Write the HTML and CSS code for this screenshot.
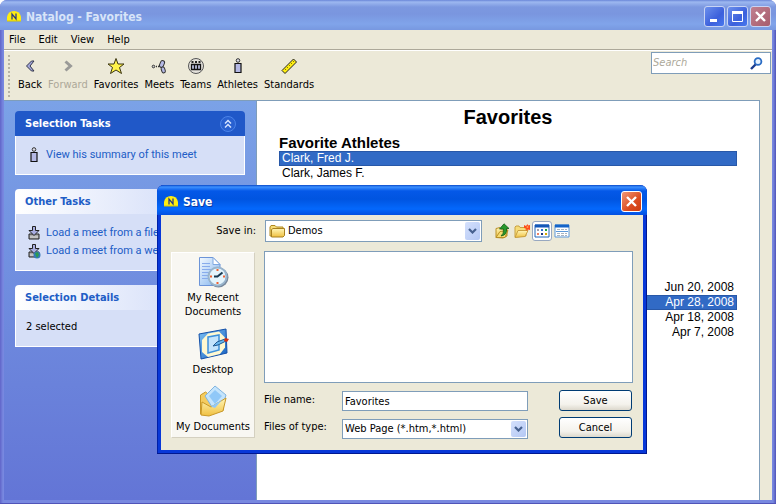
FILE: index.html
```html
<!DOCTYPE html>
<html lang="en">
<head>
<meta charset="utf-8">
<title>Natalog - Favorites</title>
<link rel="stylesheet" href="styles.css">
</head>
<body>
<svg class="defs" aria-hidden="true">
  <defs>
    <linearGradient id="blue" x1="0" y1="0" x2="1" y2="1"><stop offset="0" stop-color="#f4faff"/><stop offset="1" stop-color="#7fb2ee"/></linearGradient>
    <linearGradient id="gold" x1="0" y1="0" x2="0" y2="1"><stop offset="0" stop-color="#fff6b8"/><stop offset="1" stop-color="#f0c040"/></linearGradient>
    <linearGradient id="desk" x1="0" y1="0" x2="1" y2="1"><stop offset="0" stop-color="#7cc0f4"/><stop offset="1" stop-color="#1560c0"/></linearGradient>
    <symbol id="cap" viewBox="0 0 14 11"><path d="M0 10V6Q1 0 7 0t7 6v4z" fill="#ffee10"/><path d="M0 10h14" stroke="#d8c800"/><path d="M5 8.500V3l4 5V2.500" fill="none" stroke="#2a3c80" stroke-width="1.300"/></symbol>
    <symbol id="person" viewBox="0 0 8 16"><circle cx="4" cy="2.500" r="1.800" fill="#dcdce8" stroke="#333" stroke-width="1"/><path d="M1 5.500h6v9H1z" fill="#b4b8e4" stroke="#111" stroke-width="1.200"/></symbol>
    <symbol id="chev" viewBox="0 0 9 6"><path d="M1 1l3.500 3.500L8 1" fill="none" stroke="#46618f" stroke-width="2.200"/></symbol>
    <symbol id="load" viewBox="0 0 12 14"><path d="M1 8h10v5H1z" fill="#aaa" stroke="#222"/><path d="M4.500.5h3v4H11L6 9.500 1 4.500h3.500z" fill="#a9ade0" stroke="#222"/><path d="M2 11h8" stroke="#ddd"/></symbol>
  </defs>
</svg>
<div class="window">
  <header class="titlebar">
    <svg class="cap"><use href="#cap"/></svg>
    <h1 class="caption">Natalog - Favorites</h1>
    <button class="winbtn" aria-label="Minimize"><svg viewBox="0 0 17 17"><path d="M4 12.500h7" stroke="#fff" stroke-width="3"/></svg></button>
    <button class="winbtn" aria-label="Maximize"><svg viewBox="0 0 17 17"><path d="M3.500 3.500h10v10h-10z" fill="none" stroke="#fff"/><path d="M3 4.500h11" stroke="#fff" stroke-width="3"/></svg></button>
    <button class="winbtn close" aria-label="Close"><svg viewBox="0 0 17 17"><path d="M4 4l9 9M13 4l-9 9" stroke="#fff" stroke-width="2.400"/></svg></button>
  </header>
  <nav class="menubar"><button>File</button><button>Edit</button><button>View</button><button>Help</button></nav>
  <div class="toolbar">
    <span class="grip"></span>
    <div class="tools">
      <button><svg viewBox="0 0 18 18"><path d="M10.500 4h2.500L9 9l4 5h-2.500L5.500 9z" fill="#a4a8dc" stroke="#303448"/></svg>Back</button>
      <button disabled><svg viewBox="0 0 18 18"><path d="M6.500 4.500L11.500 9l-5 4.500" fill="none" stroke="#9a9a98" stroke-width="3"/></svg>Forward</button>
      <button><svg viewBox="0 0 18 18"><path d="M9 1.500l2 5.500h6l-4.500 3.500 2 6L9 13l-5.500 3.500 2-6L1 7h6z" fill="#fff34a" stroke="#3a3410"/></svg>Favorites</button>
      <button><svg viewBox="0 0 18 18"><circle cx="3.500" cy="9.500" r="1.300" fill="#ccc" stroke="#333"/><path d="M6 9.500h3" stroke="#333" stroke-width="1.500" stroke-dasharray="1 1"/><rect x="10" y="3.500" width="4" height="7" rx="2" transform="rotate(22 12 7)" fill="#b4b8e4" stroke="#333"/><rect x="11.500" y="10" width="3.500" height="6" rx="1.700" transform="rotate(-18 13 13)" fill="#b4b8e4" stroke="#333"/></svg>Meets</button>
      <button><svg viewBox="0 0 18 18"><circle cx="9" cy="9" r="7.500" fill="#e4e2dc" stroke="#555"/><path d="M4.500 7.500h9v5h-9zM7.500 7v6M10.500 7v6" fill="#c4c8ea" stroke="#111" stroke-width="1.300"/><path d="M4.500 5h2M8 5h2M11.500 5h2" stroke="#222" stroke-width="2"/></svg>Teams</button>
      <button><svg viewBox="0 0 18 18"><use href="#person" x="5" y="1" width="8" height="16"/></svg>Athletes</button>
      <button><svg viewBox="0 0 18 18"><path d="M2 13.500L13.500 2l3 3L5 16.500z" fill="#ffee10" stroke="#222"/><path d="M5 12l1 1m1-3l1 1m1-3l1 1m1-3l1 1m1-3l1 1" stroke="#887c00"/></svg>Standards</button>
    </div>
    <div class="search">
      <input type="search" placeholder="Search" aria-label="Search">
      <svg viewBox="0 0 13 13"><circle cx="8" cy="4.500" r="3.400" fill="#e6f2ff" stroke="#2a6cc4" stroke-width="1.800"/><path d="M5.500 7.500L1 12" stroke="#1a3c90" stroke-width="2.400"/></svg>
    </div>
  </div>
  <div class="workspace">
    <aside class="sidebar">
      <section class="task primary">
        <h2>Selection Tasks <button aria-label="Collapse"><svg viewBox="0 0 16 16"><circle cx="8" cy="8" r="7.500" fill="#2860d0" stroke="#4c84e8"/><path d="M5 7.500l3-3 3 3M5 11.500l3-3 3 3" fill="none" stroke="#d4e2ff" stroke-width="1.500"/></svg></button></h2>
        <ul><li><svg viewBox="0 0 16 16"><use href="#person" x="4" y="0" width="8" height="16"/></svg><a href="#">View his summary of this meet</a></li></ul>
      </section>
      <section class="task">
        <h2>Other Tasks</h2>
        <ul>
          <li><svg viewBox="0 0 16 16"><use href="#load" x="2" y="1" width="12" height="14"/></svg><a href="#">Load a meet from a file</a></li>
          <li><svg viewBox="0 0 16 16"><use href="#load" x="2" y="1" width="12" height="14"/><circle cx="11" cy="12" r="3.500" fill="#3478b8"/><path d="M9 10l3-1 1 3-2 3-1-2z" fill="#2c9a50"/></svg><a href="#">Load a meet from a web page</a></li>
        </ul>
      </section>
      <section class="task">
        <h2>Selection Details</h2>
        <p>2 selected</p>
      </section>
    </aside>
    <main class="page">
      <h2>Favorites</h2>
      <h3>Favorite Athletes</h3>
      <ul class="rows">
        <li class="on">Clark, Fred J.</li>
        <li>Clark, James F.</li>
      </ul>
      <ul class="rows dates">
        <li>Jun 20, 2008</li>
        <li class="on">Apr 28, 2008</li>
        <li>Apr 18, 2008</li>
        <li>Apr 7, 2008</li>
      </ul>
    </main>
  </div>

  <div class="dialog" role="dialog" aria-labelledby="dlg-title">
    <header class="titlebar">
      <svg class="cap"><use href="#cap"/></svg>
      <h2 class="caption" id="dlg-title">Save</h2>
      <button class="winbtn close" aria-label="Close"><svg viewBox="0 0 17 17"><path d="M4 4l9 9M13 4l-9 9" stroke="#fff" stroke-width="2.400"/></svg></button>
    </header>
    <form class="form">
      <div class="lookin">
        <label for="folder">Save in:</label>
        <div class="combo foldered">
          <svg class="folder" viewBox="0 0 16 14"><path d="M1 12V3l1-1.500h4L7.500 3H14v9z" fill="#f6dc78" stroke="#b08820"/><path d="M2.500 13V5.500L4 4.500h11.500v7L14 13z" fill="url(#gold)" stroke="#a88020"/></svg>
          <select id="folder"><option>Demos</option></select>
          <span class="arrow"><svg><use href="#chev"/></svg></span>
        </div>
        <div class="iconbar">
          <button type="button" aria-label="Up one level"><svg viewBox="0 0 16 16"><path d="M2 14.500V5.500l4-1 1 1.500h6v7l-4 2z" fill="url(#gold)" stroke="#b89028"/><path d="M2 14.500l4-6 8-1-3 7z" fill="#f8dc70" stroke="#b89028"/><path d="M7 13q3-2 2.500-7H5.500L10 .8 15 5.500h-2.500Q13.500 12 7 13z" fill="#28982c" stroke="#136013" stroke-width=".8"/></svg></button>
          <button type="button" aria-label="New folder"><svg viewBox="0 0 16 16"><path d="M1 14V4l1-1h3l1 1.500h6V13z" fill="#f6dc78" stroke="#c8a040"/><path d="M1 14.500l3-7h10l-3 6z" fill="url(#gold)" stroke="#c8a040"/><path d="M10 2l2 1 1.500-2L14 2.500l2-.5v5l-2-.5-1.500 1.500-.5-2.500L10 5z" fill="#ff4a18"/><circle cx="13.500" cy="4" r="1" fill="#ffa050"/></svg></button>
          <button type="button" class="pressed" aria-label="Icons"><svg viewBox="0 0 16 16"><path d="M1 2h14v12H1z" fill="#fff" stroke="#2468b8"/><path d="M1 3h14" stroke="#1458b8" stroke-width="3"/><path d="M3 7h2" stroke="#a0a0b0" stroke-width="2"/><path d="M3 11h2" stroke="#f08060" stroke-width="2"/><path d="M7 7h2" stroke="#3070d8" stroke-width="2"/><path d="M7 11h2" stroke="#203880" stroke-width="2"/><path d="M11 7h2" stroke="#20a040" stroke-width="2"/><path d="M11 11h2" stroke="#d8a800" stroke-width="2"/></svg></button>
          <button type="button" aria-label="Details"><svg viewBox="0 0 16 16"><path d="M1 2h14v12H1z" fill="#fff" stroke="#5c98d8"/><path d="M1 3h14" stroke="#1464c8" stroke-width="3"/><path d="M3 6.500h10M3 10.500h10M3 12.500h10" stroke="#a8b4c0" stroke-dasharray="3 1"/><path d="M2 8.500h12" stroke="#5c98d8"/></svg></button>
        </div>
      </div>
      <div class="browse">
        <nav class="places">
          <button type="button"><svg viewBox="0 0 32 32"><path d="M2.500 1.500H16l7 7v21H2.500z" fill="url(#blue)" stroke="#6c94d8"/><path d="M16 1.500v7h7z" fill="#fff" stroke="#80a8e0"/><path d="M5 7.500h8M5 10.500h8M5 13.500h12M5 16.500h8M5 19.500h6M5 22.500h6" stroke="#88acec"/><circle cx="21.500" cy="21.500" r="10" fill="#78889c"/><circle cx="20.500" cy="20.500" r="9" fill="#e4f4fc" stroke="#98b4cc" stroke-width="2"/><path d="M20.500 20.500l5-4M17 20.500h4" stroke="#183850" stroke-width="2"/><path d="M20.500 13v2M20.500 26v2M13 20.500h2M26 20.500h2" stroke="#f06030" stroke-width="2"/></svg>My Recent Documents</button>
          <button type="button"><svg viewBox="0 0 32 32"><path d="M2 6L29 1l1 24L4 31z" fill="url(#desk)" stroke="#1450a8"/><path d="M11 5.500l11-2 6 6v10l-5 6.500-12 3-6-5V12z" fill="#fff8d0"/><path d="M11 9l11-2v15l-11 3z" fill="#c4e4fc" stroke="#3c90dc" stroke-width="1.500"/><path d="M16 18l4-4 8-3 1 2-8 4z" fill="#68b8f0" stroke="#205890"/><path d="M28 10l4 1-2 3-3-1z" fill="#d83010"/></svg>Desktop</button>
          <button type="button"><svg viewBox="0 0 32 32"><path d="M3.500 29V10l5-3 5 4 13 2v12z" fill="#f4cc60" stroke="#c89828"/><path d="M8 11L18 1l11 9-3 10-9 5z" fill="#c4e4fc" stroke="#80b4e0"/><path d="M12 11l6-6 7 6-7 8z" fill="#90c8f8"/><path d="M4 30l1-13 9 5 15-9-3 13-14 5z" fill="url(#gold)" stroke="#c89828"/><path d="M14 21.500l11-6.500-7 8z" fill="#90c8f8"/></svg>My Documents</button>
        </nav>
        <div class="files">
          <div class="listing"></div>
          <div class="fields">
            <label for="fname">File name:</label>
            <input id="fname" type="text" value="Favorites">
            <button type="submit" class="push">Save</button>
            <label for="ftype">Files of type:</label>
            <div class="combo">
              <select id="ftype"><option>Web Page (*.htm,*.html)</option></select>
              <span class="arrow"><svg><use href="#chev"/></svg></span>
            </div>
            <button type="button" class="push">Cancel</button>
          </div>
        </div>
      </div>
    </form>
  </div>
</div>
</body>
</html>
```
FILE: styles.css
```css
* { box-sizing: border-box; margin: 0; padding: 0; }
:root {
  --face: #ece9d8;
  --line: #7f9db9;
  --link: #215dc6;
}
html, body { height: 100%; }
body, button, input, select {
  font: 11px/14px "DejaVu Sans Condensed", "Noto Sans", sans-serif;
  color: #000;
}
body { background: #fff; overflow: hidden; }
button { background: none; border: 0; }
ul { list-style: none; }
svg { display: block; flex: none; }
.defs { position: absolute; width: 0; height: 0; }

.window {
  position: relative;
  display: flex;
  flex-direction: column;
  min-height: 100vh;
  padding: 0 4px 4px;
  border-radius: 7px 7px 0 0;
  background: linear-gradient(to right, #6064c8 0, #7888e0 3px, #7888e0 calc(100% - 3px), #5054b8 100%);
  box-shadow: inset 0 -1px #5054b8;
}
.titlebar {
  display: flex;
  align-items: center;
  gap: 2px;
  height: 30px;
  margin: 0 -4px;
  padding: 3px 5px 0 7px;
  border-radius: 7px 7px 0 0;
  background: linear-gradient(#6a86d8 0, #9db8f0 2px, #7c98e0 7px, #7a96df 14px, #80a4ea 24px, #7898e0 30px);
}
.cap { width: 14px; height: 11px; }
.caption {
  flex: 1;
  padding-left: 3px;
  font: bold 12px/16px "DejaVu Sans Condensed", "Noto Sans", sans-serif;
  color: #d8e4f8;
}
.winbtn {
  width: 21px;
  height: 21px;
  border: 1px solid #c8d4f4;
  border-radius: 3px;
  padding: 1px;
  background: linear-gradient(135deg, #6c90ec, #3c60dc 60%, #4878ee);
}
.winbtn.close { background: linear-gradient(135deg, #c08090, #a85c6c); }

.menubar {
  display: flex;
  gap: 13px;
  height: 20px;
  padding: 0 5px;
  background: var(--face);
  border-bottom: 1px solid #aca899;
}
.toolbar {
  display: flex;
  justify-content: space-between;
  height: 50px;
  padding: 1px 1px 0 4px;
  background: var(--face);
  border-top: 1px solid #fff;
}
.grip {
  width: 2px;
  margin: 3px 0;
  background: repeating-linear-gradient(#b8b4a4 0 2px, transparent 2px 4px);
}
.tools { display: flex; flex: 1; gap: 6px; padding: 5px 8px; }
.tools button {
  display: flex;
  flex-direction: column;
  align-items: center;
  gap: 3px;
  height: 36px;
}
.tools svg { width: 18px; height: 18px; }
.tools button:disabled { color: #aca899; }
.search {
  display: flex;
  align-items: center;
  width: 120px;
  height: 22px;
  padding-right: 7px;
  background: #fff;
  border: 1px solid var(--line);
}
.search input {
  flex: 1;
  min-width: 0;
  padding-left: 1px;
  border: 0;
  outline: 0;
  background: none;
  font-style: italic;
}
.search input::placeholder { color: #aca899; }
.search svg { width: 13px; height: 13px; }

.workspace { display: flex; flex: 1; padding-right: 12px; background: var(--face); }
.sidebar {
  display: flex;
  flex-direction: column;
  gap: 14px;
  width: 253px;
  padding: 10px 11px;
  background: linear-gradient(#7ba2e7, #6375d6);
  border-top: 1px solid var(--line);
  border-right: 1px solid var(--line);
}
.task { border-radius: 4px 4px 0 0; overflow: hidden; }
.task h2 {
  display: flex;
  justify-content: space-between;
  align-items: center;
  height: 25px;
  padding: 0 9px 0 10px;
  font-size: 11px;
  color: var(--link);
  background: linear-gradient(to right, #fff, #c6d3f7);
}
.task.primary h2 { color: #fff; background: #2058c8; }
.task h2 svg { width: 16px; height: 16px; }
.task ul, .task p {
  padding: 10px;
  background: #d6dff7;
  border: 1px solid #fff;
  border-top: 0;
}
.task p { padding-bottom: 12px; }
.task li { display: flex; align-items: center; gap: 4px; height: 18px; white-space: nowrap; }
.task li svg { width: 16px; height: 16px; }
.task a {
  font-family: Roboto, sans-serif;
  color: var(--link);
  text-decoration: none;
}

.page {
  flex: 1;
  padding: 5px 22px;
  background: #fff;
  border-top: 1px solid var(--line);
  border-right: 1px solid var(--line);
  font: 12px/15px "Liberation Sans", sans-serif;
}
.page h2 { font-size: 20px; line-height: 22px; text-align: center; }
.page h3 { margin-top: 7px; font-size: 15px; line-height: 16px; }
.rows li { padding: 0 3px; }
.rows .on { color: #fff; background: #316ac5; box-shadow: inset 0 0 0 1px #2858a8; }
.dates { margin-top: 99px; text-align: right; }

.dialog {
  position: absolute;
  top: 185px;
  left: 157px;
  width: 490px;
  padding: 0 4px 4px;
  border-radius: 7px 7px 0 0;
  background: #0838d8;
  box-shadow: inset -1px -1px #001890, inset 1px 0 #0020a8;
}
.dialog .titlebar {
  background: linear-gradient(#0848c8 0, #3c90ff 2px, #0458e8 6px, #0054e0 14px, #0468fc 24px, #0450e0 30px);
}
.dialog .caption { color: #fff; text-shadow: 1px 1px #0838a0; }
.dialog .close { border-color: #fff; background: linear-gradient(135deg, #f09878, #dc4c20 60%, #cc3c10); }
.form { padding: 5px 10px 11px; background: var(--face); }
.lookin { display: flex; align-items: center; height: 22px; }
.lookin label { width: 85px; text-align: right; }
.combo { position: relative; }
.foldered { width: 217px; margin-left: 9px; }
.folder { position: absolute; left: 4px; top: 4px; width: 16px; height: 14px; }
.arrow {
  position: absolute;
  right: 2px;
  top: 2px;
  bottom: 2px;
  width: 15px;
  display: grid;
  place-items: center;
  border-radius: 2px;
  background: linear-gradient(135deg, #d4e0fc, #b4c8f4);
  pointer-events: none;
}
.arrow svg { width: 9px; height: 6px; }
.form select, .form input {
  display: block;
  width: 100%;
  height: 20px;
  padding: 0 2px;
  appearance: none;
  border: 1px solid var(--line);
  border-radius: 0;
  background: #fff;
}
.form .foldered select { height: 22px; padding-left: 22px; }
.iconbar { display: flex; align-items: center; padding-left: 10px; }
.iconbar button { width: 20px; height: 20px; padding: 1px; border: 1px solid transparent; border-radius: 3px; }
.iconbar svg { width: 16px; height: 16px; }
.iconbar .pressed { background: #fff; border-color: #98a8c0; }

.browse { display: flex; gap: 9px; margin-top: 9px; }
.places {
  display: flex;
  flex-direction: column;
  justify-content: space-between;
  width: 84px;
  margin: 1px 0;
  padding: 3px 0;
  background: #f8f7f2;
  border: 1px solid #fff;
  border-right-color: #d4d0c0;
  border-bottom-color: #d4d0c0;
}
.places button {
  display: flex;
  flex-direction: column;
  align-items: center;
  gap: 3px;
  padding: 0 12px;
}
.places button:last-child { padding: 0; }
.places svg { width: 32px; height: 32px; }
.files { flex: 1; }
.listing { height: 132px; background: #fff; border: 1px solid var(--line); }
.fields {
  display: grid;
  grid-template-columns: 78px 1fr 73px;
  row-gap: 6px;
  padding: 7px 1px 0 0;
}
.fields > input, .fields > .combo { width: calc(100% - 31px); }
.fields > input { margin-top: 1px; }
.fields > .combo { margin-top: 2px; }
.fields label { padding-top: 3px; }
.push {
  height: 21px;
  border: 1px solid #003c74;
  border-radius: 3px;
  background: linear-gradient(#fff, #f4f2ec 70%, #dcd8cc);
}
```
